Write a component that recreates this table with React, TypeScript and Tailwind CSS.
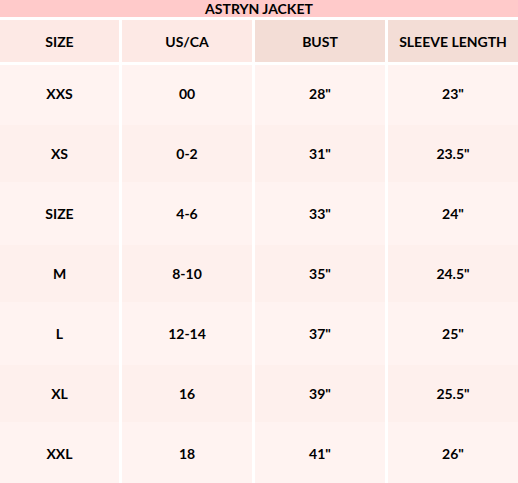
import React from 'react';

const rows = [
  ['XXS', '00', '28"', '23"'],
  ['XS', '0-2', '31"', '23.5"'],
  ['SIZE', '4-6', '33"', '24"'],
  ['M', '8-10', '35"', '24.5"'],
  ['L', '12-14', '37"', '25"'],
  ['XL', '16', '39"', '25.5"'],
  ['XXL', '18', '41"', '26"'],
];

const widths = ['w-[119px]', 'w-[130px]', 'w-[130px]', 'w-[130px]'];

export default function App() {
  return (
    <div
      className="w-[518px] h-[483px] overflow-hidden bg-white text-[14px] font-bold text-black"
      style={{ fontFamily: 'Lato, "Open Sans", sans-serif' }}
    >
      {/* Titel */}
      <div className="h-[17px] bg-[#ffcaca] flex items-center justify-center leading-none">
        ASTRYN JACKET
      </div>

      {/* Rubrikrad */}
      <div className="mt-[3px] flex gap-[3px] h-[42px]">
        {['SIZE', 'US/CA', 'BUST', 'SLEEVE LENGTH'].map((h, i) => (
          <div
            key={h}
            className={`${widths[i]} flex items-center justify-center ${i < 2 ? 'bg-[#fde9e5]' : 'bg-[#f3ddd6]'}`}
          >
            {h}
          </div>
        ))}
      </div>

      {/* Data */}
      <div className="mt-[3px] flex flex-col">
        {rows.map((r, ri) => (
          <div key={ri} className="flex gap-[3px]">
            {r.map((c, ci) => (
              <div key={ci} className={`${widths[ci]} h-[60px] bg-[#fff3f1]`}>
                <div
                  className={`h-[57px] flex items-center justify-center ${ri % 2 === 1 ? 'bg-[#fef0ed]' : 'bg-[#fff3f1]'}`}
                >
                  {c}
                </div>
              </div>
            ))}
          </div>
        ))}
      </div>
    </div>
  );
}
